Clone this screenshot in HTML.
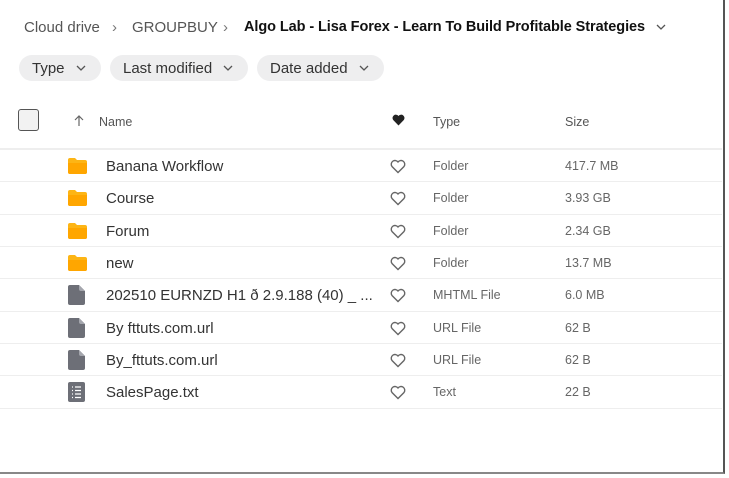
<!DOCTYPE html>
<html><head><style>
*{margin:0;padding:0;box-sizing:border-box}
body{width:729px;height:478px;background:#fff;font-family:"Liberation Sans",sans-serif;position:relative;overflow:hidden;color:#333}
.frame{position:absolute;left:0;top:0;width:725px;height:474px;border-right:2px solid #555;border-bottom:2px solid #888;}
.t{position:absolute;white-space:nowrap}
.bc{top:19px;font-size:15px;color:#555}
.chip{position:absolute;top:55px;height:26px;background:#eeeeef;border-radius:13px;font-size:15px;color:#333;padding:5px 0 0 13px}
.hdr{position:absolute;top:115px;font-size:12.5px;color:#555}
.row{position:absolute;left:0;width:722px;height:32px;border-top:1px solid #eee}
.row .n{position:absolute;left:106px;top:8px;font-size:15px;color:#333}
.row .ty{position:absolute;left:433px;top:9px;font-size:12.5px;color:#666}
.row .sz{position:absolute;left:565px;top:9px;font-size:12.5px;color:#666}
.row svg{position:absolute}
</style></head><body>
<div class="frame"></div>
<div class="t bc" style="left:24px">Cloud drive</div>
<div class="t bc" style="left:112px;color:#777">&#8250;</div>
<div class="t bc" style="left:132px">GROUPBUY</div>
<div class="t bc" style="left:223px;color:#777">&#8250;</div>
<div class="t bc" style="left:244px;color:#111;font-weight:bold;font-size:14.5px;letter-spacing:-0.08px">Algo Lab - Lisa Forex - Learn To Build Profitable Strategies</div>
<svg style="position:absolute;left:656px;top:24px" width="10" height="7"><path d="M1 1l4 4 4-4" stroke="#555" stroke-width="1.3" fill="none"/></svg>

<div class="chip" style="left:19px;width:82px">Type<svg style="position:absolute;left:57px;top:10px" width="10" height="7"><path d="M1 1l4 4 4-4" stroke="#555" stroke-width="1.3" fill="none"/></svg></div>
<div class="chip" style="left:110px;width:138px">Last modified<svg style="position:absolute;left:113px;top:10px" width="10" height="7"><path d="M1 1l4 4 4-4" stroke="#555" stroke-width="1.3" fill="none"/></svg></div>
<div class="chip" style="left:257px;width:127px">Date added<svg style="position:absolute;left:102px;top:10px" width="10" height="7"><path d="M1 1l4 4 4-4" stroke="#555" stroke-width="1.3" fill="none"/></svg></div>

<div style="position:absolute;left:18px;top:109px;width:21px;height:22px;border:1.5px solid #555;border-radius:3px;background:#f2f2f2"></div>
<svg style="position:absolute;left:74px;top:115px" width="10" height="12"><path d="M5 11V1M1 5l4-4 4 4" stroke="#666" stroke-width="1.2" fill="none"/></svg>
<div class="hdr" style="left:99px">Name</div>
<svg style="position:absolute;left:392px;top:114px" width="13" height="12"><path d="M6.5 11.5L1.2 6A3.2 3.2 0 016.5 2a3.2 3.2 0 015.3 4z" fill="#222"/></svg>
<div class="hdr" style="left:433px">Type</div>
<div class="hdr" style="left:565px">Size</div>

<div style="position:absolute;left:0;top:148px;width:722px;border-top:1px solid #eee"></div>

<div id="rows"></div>
<script>
var rows=[["Banana Workflow","Folder","417.7 MB","f"],["Course","Folder","3.93 GB","f"],["Forum","Folder","2.34 GB","f"],["new","Folder","13.7 MB","f"],["202510 EURNZD H1 ð 2.9.188 (40) _ ...","MHTML File","6.0 MB","d"],["By fttuts.com.url","URL File","62 B","d"],["By_fttuts.com.url","URL File","62 B","d"],["SalesPage.txt","Text","22 B","t"]];
var h="";
rows.forEach(function(r,i){
 var top=149+i*32.35;
 var ic;
 if(r[3]=="f") ic='<svg style="left:68px;top:8px" width="19" height="16"><path d="M0 2a2 2 0 012-2h5l2 2h8a2 2 0 012 2v10a2 2 0 01-2 2H2a2 2 0 01-2-2z" fill="#fdb515"/><path d="M0 5h19v9a2 2 0 01-2 2H2a2 2 0 01-2-2z" fill="#ffa600"/></svg>';
 else if(r[3]=="d") ic='<svg style="left:68px;top:6px" width="17" height="20"><path d="M2 0h9l6 6v12a2 2 0 01-2 2H2a2 2 0 01-2-2V2a2 2 0 012-2z" fill="#6d6f77"/><path d="M11 0v4a2 2 0 002 2h4z" fill="#a4a6ad"/></svg>';
 else ic='<svg style="left:68px;top:6px" width="17" height="20"><rect width="17" height="20" rx="2" fill="#6d6f77"/><path d="M4 5h1M4 8.5h1M4 12h1M4 15.5h1M7 5h6M7 8.5h6M7 12h6M7 15.5h6" stroke="#fff" stroke-width="1.3"/></svg>';
 h+='<div class="row" style="top:'+top+'px">'+ic+'<div class="n">'+r[0]+'</div><svg style="left:390px;top:9px" width="16" height="15"><path d="M8 13.5L2 7.5A3.4 3.4 0 018 3a3.4 3.4 0 016 4.5z" fill="none" stroke="#666" stroke-width="1.4"/></svg><div class="ty">'+r[1]+'</div><div class="sz">'+r[2]+'</div></div>';
});
h+='<div style="position:absolute;left:0;top:'+(149+8*32.35)+'px;width:722px;border-top:1px solid #eee"></div>';
document.getElementById("rows").innerHTML=h;
</script>
</body></html>
